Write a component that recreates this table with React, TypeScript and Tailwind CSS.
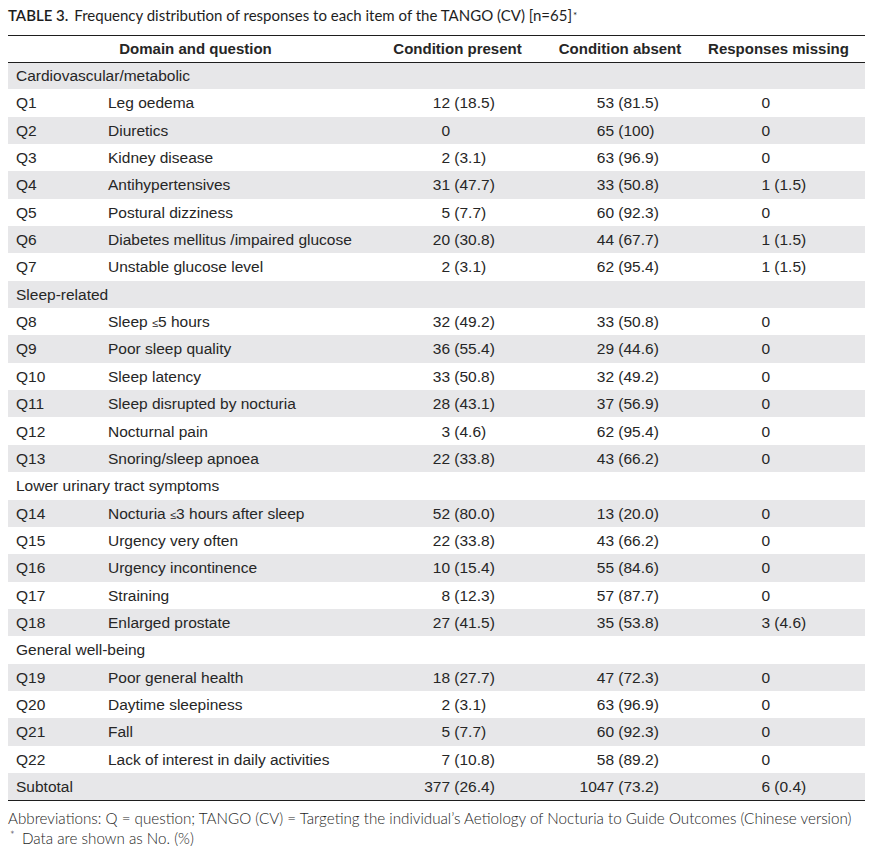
type Row =
  | { kind: "cat"; label: string }
  | { kind: "q"; q: string; text: string; present: string; absent: string; missing: string };

const rows: Row[] = [
  { kind: "cat", label: "Cardiovascular/metabolic" },
  { kind: "q", q: "Q1", text: "Leg oedema", present: "12 (18.5)", absent: "53 (81.5)", missing: "0" },
  { kind: "q", q: "Q2", text: "Diuretics", present: "0", absent: "65 (100)", missing: "0" },
  { kind: "q", q: "Q3", text: "Kidney disease", present: "2 (3.1)", absent: "63 (96.9)", missing: "0" },
  { kind: "q", q: "Q4", text: "Antihypertensives", present: "31 (47.7)", absent: "33 (50.8)", missing: "1 (1.5)" },
  { kind: "q", q: "Q5", text: "Postural dizziness", present: "5 (7.7)", absent: "60 (92.3)", missing: "0" },
  { kind: "q", q: "Q6", text: "Diabetes mellitus /impaired glucose", present: "20 (30.8)", absent: "44 (67.7)", missing: "1 (1.5)" },
  { kind: "q", q: "Q7", text: "Unstable glucose level", present: "2 (3.1)", absent: "62 (95.4)", missing: "1 (1.5)" },
  { kind: "cat", label: "Sleep-related" },
  { kind: "q", q: "Q8", text: "Sleep ≤5 hours", present: "32 (49.2)", absent: "33 (50.8)", missing: "0" },
  { kind: "q", q: "Q9", text: "Poor sleep quality", present: "36 (55.4)", absent: "29 (44.6)", missing: "0" },
  { kind: "q", q: "Q10", text: "Sleep latency", present: "33 (50.8)", absent: "32 (49.2)", missing: "0" },
  { kind: "q", q: "Q11", text: "Sleep disrupted by nocturia", present: "28 (43.1)", absent: "37 (56.9)", missing: "0" },
  { kind: "q", q: "Q12", text: "Nocturnal pain", present: "3 (4.6)", absent: "62 (95.4)", missing: "0" },
  { kind: "q", q: "Q13", text: "Snoring/sleep apnoea", present: "22 (33.8)", absent: "43 (66.2)", missing: "0" },
  { kind: "cat", label: "Lower urinary tract symptoms" },
  { kind: "q", q: "Q14", text: "Nocturia ≤3 hours after sleep", present: "52 (80.0)", absent: "13 (20.0)", missing: "0" },
  { kind: "q", q: "Q15", text: "Urgency very often", present: "22 (33.8)", absent: "43 (66.2)", missing: "0" },
  { kind: "q", q: "Q16", text: "Urgency incontinence", present: "10 (15.4)", absent: "55 (84.6)", missing: "0" },
  { kind: "q", q: "Q17", text: "Straining", present: "8 (12.3)", absent: "57 (87.7)", missing: "0" },
  { kind: "q", q: "Q18", text: "Enlarged prostate", present: "27 (41.5)", absent: "35 (53.8)", missing: "3 (4.6)" },
  { kind: "cat", label: "General well-being" },
  { kind: "q", q: "Q19", text: "Poor general health", present: "18 (27.7)", absent: "47 (72.3)", missing: "0" },
  { kind: "q", q: "Q20", text: "Daytime sleepiness", present: "2 (3.1)", absent: "63 (96.9)", missing: "0" },
  { kind: "q", q: "Q21", text: "Fall", present: "5 (7.7)", absent: "60 (92.3)", missing: "0" },
  { kind: "q", q: "Q22", text: "Lack of interest in daily activities", present: "7 (10.8)", absent: "58 (89.2)", missing: "0" },
  { kind: "q", q: "Subtotal", text: "", present: "377 (26.4)", absent: "1047 (73.2)", missing: "6 (0.4)" },
];

// count right-aligned in a fixed box so the ones digits line up
function Num({ v, pad }: { v: string; pad: string }) {
  const i = v.indexOf(" ");
  const count = i < 0 ? v : v.slice(0, i);
  const rest = i < 0 ? "" : v.slice(i);
  return (
    <td className={`${pad} whitespace-nowrap`}>
      <span className="inline-block w-[40px] text-right">{count}</span>
      {rest}
    </td>
  );
}

function Text({ s }: { s: string }) {
  // the ≤ sign is set smaller in the source
  const parts = s.split("≤");
  if (parts.length === 1) return <>{s}</>;
  return (
    <>
      {parts[0]}
      <span className="text-[11px]">≤</span>
      {parts[1]}
    </>
  );
}

export default function App() {
  return (
    <div className="w-[870px] h-[857px] bg-white text-[#262626] pt-[6px]">
      <div className="pl-[8px] font-['Lato',sans-serif] text-[15px] leading-[18px] text-[#1e1e1e]">
        <span className="font-semibold">TABLE 3.</span>
        <span className="ml-[6px]">
          Frequency distribution of responses to each item of the TANGO (CV) [n=65]
        </span>
        <sup className="text-[10px] relative -top-[2px] ml-[1px]">*</sup>
      </div>

      <table className="mt-[11px] ml-[8px] w-[857px] table-fixed border-collapse font-['Liberation_Sans',Arial,sans-serif] text-[15.5px]">
        <colgroup>
          <col className="w-[100px]" />
          <col className="w-[267px]" />
          <col className="w-[165px]" />
          <col className="w-[160px]" />
          <col className="w-[165px]" />
        </colgroup>
        <thead>
          <tr className="h-[26.5px] border-t-[1.5px] border-b-[1.5px] border-[#1e1e1e] text-[15px]">
            <th colSpan={2} className="text-center font-bold pl-[8px]">Domain and question</th>
            <th className="text-center font-bold">Condition present</th>
            <th className="text-center font-bold">Condition absent</th>
            <th className="text-center font-bold pr-[8px]">Responses missing</th>
          </tr>
        </thead>
        <tbody>
          {rows.map((r, i) => {
            const bg = i % 2 === 0 ? "bg-[#e7e7e9]" : "bg-white";
            if (r.kind === "cat") {
              return (
                <tr key={i} className={`h-[27.35px] ${bg}`}>
                  <td colSpan={5} className="pl-[8px]">{r.label}</td>
                </tr>
              );
            }
            const last = i === rows.length - 1;
            return (
              <tr
                key={i}
                className={`h-[27.35px] ${bg} ${last ? "border-b-[1.5px] border-[#1e1e1e]" : ""}`}
              >
                <td className="pl-[8px]">{r.q}</td>
                <td className="whitespace-nowrap">
                  <Text s={r.text} />
                </td>
                <Num v={r.present} pad="pl-[35px]" />
                <Num v={r.absent} pad="pl-[34px]" />
                <Num v={r.missing} pad="pl-[30px]" />
              </tr>
            );
          })}
        </tbody>
      </table>

      <div className="mt-[7px] pl-[8px] font-['Lato',sans-serif] font-light text-[15.2px] leading-[20px] text-[#1e1e1e] whitespace-nowrap">
        <div>
          Abbreviations: Q = question; TANGO (CV) = Targeting the individual’s Aetiology of
          Nocturia to Guide Outcomes (Chinese version)
        </div>
        <div className="flex">
          <span className="w-[14px] text-[11px] leading-[14px] pl-[2px]">*</span>
          <span>Data are shown as No. (%)</span>
        </div>
      </div>
    </div>
  );
}
